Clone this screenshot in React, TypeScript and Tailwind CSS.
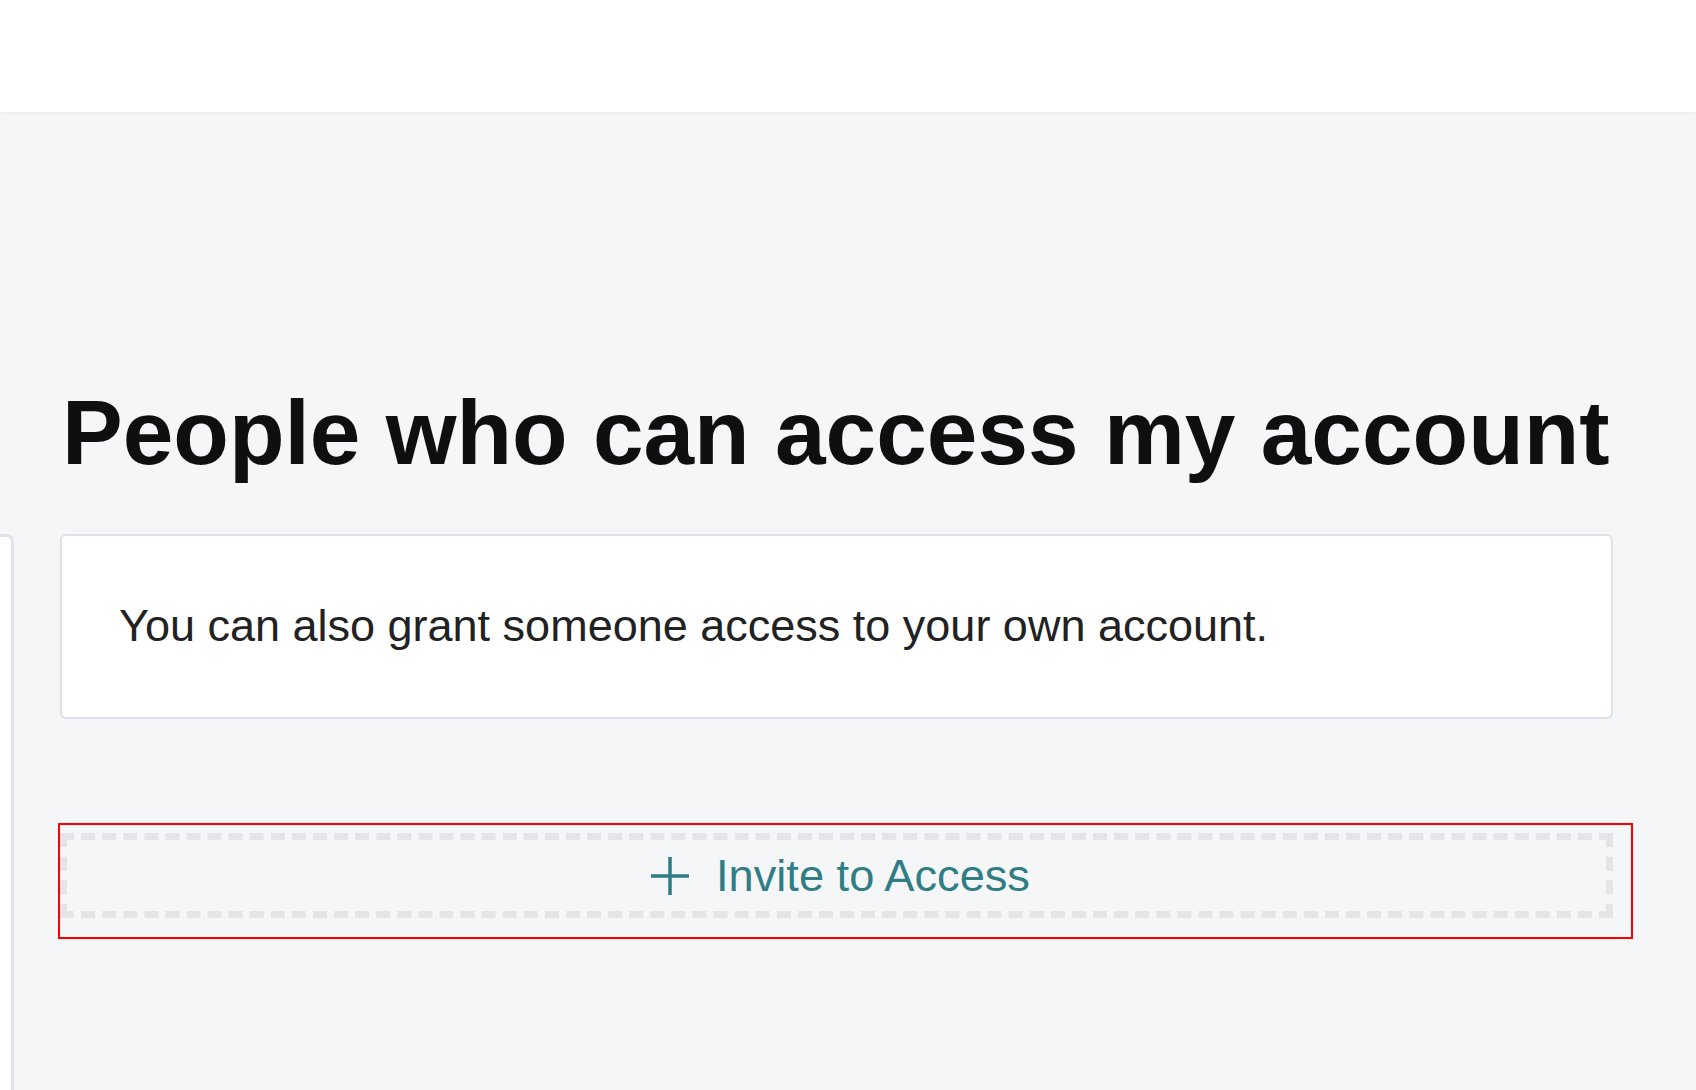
function InviteButton() {
  return (
    <div className="relative mt-[114px]">
      {/* annotation outline drawn over the button */}
      <div className="absolute -left-[2px] -top-[10px] -right-[20px] -bottom-[21px] border-2 border-[#ff0000] pointer-events-none" />
      <button className="w-full h-[85px] flex items-center justify-center gap-[25px] pl-[6px] border-[7px] border-dashed border-[#e4e5e6] bg-transparent text-[#2f7d85]">
        <svg width="42" height="42" viewBox="0 0 42 42" className="shrink-0">
          <path d="M21 2v38M2 21h38" stroke="#2f7d85" strokeWidth="3.5" />
        </svg>
        <span className="text-[45.2px] leading-none">Invite to Access</span>
      </button>
    </div>
  )
}

function App() {
  return (
    <div className="h-screen overflow-hidden flex flex-col bg-[#f5f6f8] font-['Liberation_Sans',Arial,sans-serif]">
      <header className="h-[112px] shrink-0 bg-white shadow-[0_1px_4px_rgba(0,0,0,0.05)]" />

      <div className="flex-1 flex flex-col pt-[275px]">
        <h1 className="ml-[62px] text-[91px] leading-none font-bold text-[#0f0f0f]">
          People who can access my account
        </h1>

        <div className="flex-1 flex mt-[56px]">
          <aside className="w-[14px] bg-white border-t-[3px] border-r-[3px] border-[#dde3e8] rounded-tr-lg" />

          <main className="ml-[46px] w-[1553px]">
            <div className="h-[185px] flex items-center pl-[57px] bg-white border-2 border-[#dce2e7] rounded-md">
              <p className="text-[45px] leading-none text-[#222] -mt-[3px]">
                You can also grant someone access to your own account.
              </p>
            </div>

            <InviteButton />
          </main>
        </div>
      </div>
    </div>
  )
}

export default App
